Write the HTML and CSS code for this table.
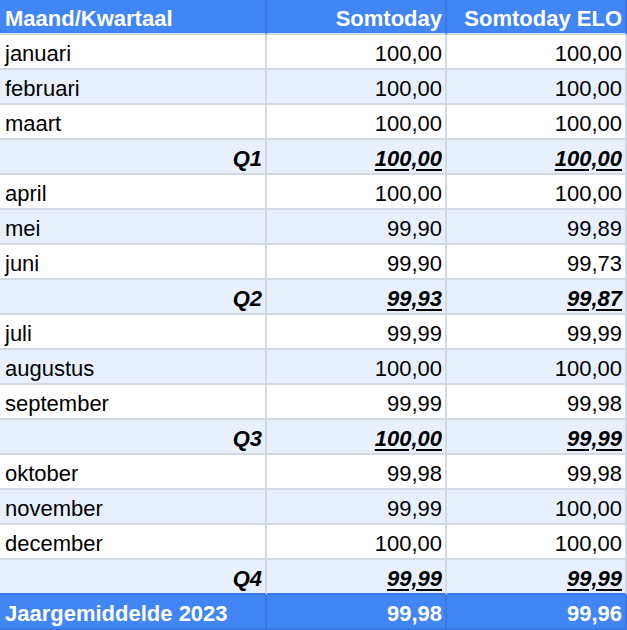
FILE: index.html
```html
<!DOCTYPE html>
<html lang="nl">
<head>
<meta charset="utf-8">
<link rel="stylesheet" href="styles.css">
</head>
<body>
<div class="sheet">
  <div class="row head"><div class="c l">Maand/Kwartaal</div><div class="c">Somtoday</div><div class="c">Somtoday ELO</div></div>
  <div class="row"><div class="c l">januari</div><div class="c">100,00</div><div class="c">100,00</div></div>
  <div class="row alt"><div class="c l">februari</div><div class="c">100,00</div><div class="c">100,00</div></div>
  <div class="row"><div class="c l">maart</div><div class="c">100,00</div><div class="c">100,00</div></div>
  <div class="row alt q"><div class="c">Q1</div><div class="c"><u>100,00</u></div><div class="c"><u>100,00</u></div></div>
  <div class="row"><div class="c l">april</div><div class="c">100,00</div><div class="c">100,00</div></div>
  <div class="row alt"><div class="c l">mei</div><div class="c">99,90</div><div class="c">99,89</div></div>
  <div class="row"><div class="c l">juni</div><div class="c">99,90</div><div class="c">99,73</div></div>
  <div class="row alt q"><div class="c">Q2</div><div class="c"><u>99,93</u></div><div class="c"><u>99,87</u></div></div>
  <div class="row"><div class="c l">juli</div><div class="c">99,99</div><div class="c">99,99</div></div>
  <div class="row alt"><div class="c l">augustus</div><div class="c">100,00</div><div class="c">100,00</div></div>
  <div class="row"><div class="c l">september</div><div class="c">99,99</div><div class="c">99,98</div></div>
  <div class="row alt q"><div class="c">Q3</div><div class="c"><u>100,00</u></div><div class="c"><u>99,99</u></div></div>
  <div class="row"><div class="c l">oktober</div><div class="c">99,98</div><div class="c">99,98</div></div>
  <div class="row alt"><div class="c l">november</div><div class="c">99,99</div><div class="c">100,00</div></div>
  <div class="row"><div class="c l">december</div><div class="c">100,00</div><div class="c">100,00</div></div>
  <div class="row alt q last"><div class="c">Q4</div><div class="c"><u>99,99</u></div><div class="c"><u>99,99</u></div></div>
  <div class="row foot"><div class="c l">Jaargemiddelde 2023</div><div class="c">99,98</div><div class="c">99,96</div></div>
</div>
</body>
</html>
```
FILE: styles.css
```css
html, body {
  margin: 0;
  padding: 0;
  background: #ffffff;
}
.sheet {
  width: 627px;
  font-family: "Liberation Sans", Arial, sans-serif;
  font-size: 22px;
  color: #000;
}
.row {
  display: grid;
  grid-template-columns: 267px 180px 180px;
  height: 35px;
  background: #ffffff;
}
.row.alt {
  background: #e8f0fe;
}
.c {
  box-sizing: border-box;
  height: 35px;
  border-right: 2px solid #d3d9e3;
  border-bottom: 2px solid #d3d9e3;
  padding: 4px 3px 0 5px;
  display: flex;
  align-items: center;
  justify-content: flex-end;
  white-space: nowrap;
}
.c.l {
  justify-content: flex-start;
}
.head {
  background: #4285f4;
  color: #fff;
  font-weight: bold;
}
.head .c {
  border-right-color: #3b78e7;
}
.q .c {
  font-weight: bold;
  font-style: italic;
}
.q u {
  text-decoration-thickness: 2px;
  text-underline-offset: 3px;
}
.last .c {
  border-bottom-color: #3b78e7;
}
.foot {
  background: #4285f4;
  color: #fff;
  font-weight: bold;
}
.foot .c {
  border-right-color: #3b78e7;
  border-bottom-color: #3b78e7;
}
```
